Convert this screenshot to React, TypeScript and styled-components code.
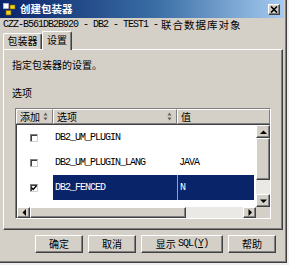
import React from "react";
import styled, { createGlobalStyle } from "styled-components";

const CJK = `"Noto Sans CJK SC", "Liberation Sans", sans-serif`;
const MONO = `"Liberation Mono", "Noto Sans CJK SC", monospace`;

const GlobalStyle = createGlobalStyle`
  html, body { margin: 0; padding: 0; background: #efefef; }
  body { width: 289px; height: 265px; overflow: hidden; font-family: ${CJK}; }
  * { box-sizing: border-box; }
`;

const raised = `
  background: #d4d0c8;
  border: 1px solid;
  border-color: #ffffff #404040 #404040 #ffffff;
  box-shadow: inset -1px -1px 0 #808080;
`;

const Window = styled.div`
  width: 287px;
  height: 263px;
  background: #d4d0c8;
  border-right: 1px solid #404040;
  border-bottom: 1px solid #404040;
  box-shadow: inset -1px -1px 0 #808080;
  display: flex;
  flex-direction: column;
`;

const TitleBar = styled.div`
  height: 18px;
  margin-right: 2px;
  background: linear-gradient(to right, #0a246a 0%, #3a6ea5 55%, #a6caf0 100%);
  display: flex;
  align-items: center;
  padding: 0 3px 0 3px;
  gap: 4px;
`;

const Title = styled.span`
  color: #ffffff;
  font-family: ${CJK};
  font-weight: bold;
  font-size: 10.5px;
  line-height: 18px;
`;

const CloseButton = styled.div`
  ${raised}
  margin-left: auto;
  margin-right: 1px;
  width: 12px;
  height: 11px;
  display: flex;
  align-items: center;
  justify-content: center;
`;

const Subtitle = styled.div`
  height: 13px;
  padding-left: 3px;
  display: flex;
  align-items: center;
  white-space: pre;
  color: #000;
`;

const Mono = styled.span<{ $color?: string }>`
  font-family: ${MONO};
  font-size: 10px;
  letter-spacing: -1px;
  white-space: pre;
  color: ${(p) => p.$color || "#000"};
`;

const SubCJK = styled.span`
  font-family: ${CJK};
  font-size: 10.5px;
  letter-spacing: 1px;
  line-height: 13px;
  margin-left: 3px;
`;

const TabStrip = styled.div`
  height: 18px;
  padding-left: 3px;
  display: flex;
  align-items: flex-end;
`;

const Tab = styled.div<{ $active?: boolean; $w: number }>`
  width: ${(p) => p.$w}px;
  height: ${(p) => (p.$active ? 19 : 16)}px;
  margin-bottom: ${(p) => (p.$active ? -1 : 0)}px;
  position: relative;
  z-index: ${(p) => (p.$active ? 1 : 0)};
  background: #d4d0c8;
  border-top: 1px solid #ffffff;
  border-left: 1px solid #ffffff;
  border-right: 1px solid #404040;
  box-shadow: inset -1px 0 0 #808080;
  border-radius: 2px 2px 0 0;
  font-family: ${CJK};
  font-size: 10px;
  line-height: ${(p) => (p.$active ? 16 : 14)}px;
  text-align: center;
  color: #000;
`;

const Panel = styled.div`
  width: 280px;
  height: 181px;
  margin-left: 3px;
  border: 1px solid;
  border-color: #ffffff #404040 #404040 #ffffff;
  box-shadow: inset -1px -1px 0 #808080;
  display: flex;
  flex-direction: column;
`;

const Text = styled.div<{ $mt: number }>`
  margin: ${(p) => p.$mt}px 0 0 8px;
  font-family: ${CJK};
  font-size: 10px;
  line-height: 12px;
  color: #000;
`;

const TableFrame = styled.div`
  margin: 9px 0 0 11px;
  width: 256px;
  height: 111px;
  border: 1px solid;
  border-color: #808080 #ffffff #ffffff #808080;
  background: #ffffff;
  display: flex;
  flex-direction: column;
`;

const Header = styled.div`
  height: 15px;
  display: flex;
  background: #d4d0c8;
`;

const HeaderCell = styled.div<{ $w?: number }>`
  ${(p) => (p.$w ? `width: ${p.$w}px;` : "flex: 1;")}
  height: 15px;
  border-top: 1px solid #ffffff;
  border-left: 1px solid #ffffff;
  border-right: 1px solid #808080;
  border-bottom: 1px solid #808080;
  display: flex;
  align-items: center;
  padding: 0 4px 0 3px;
  font-family: ${CJK};
  font-size: 10px;
  line-height: 13px;
  color: #000;
`;

const SortIcon = styled.svg`
  margin-left: auto;
`;

const ListArea = styled.div`
  flex: 1;
  border-top: 1px solid #404040;
  border-left: 1px solid #404040;
  display: grid;
  grid-template-columns: 1fr 14px;
  grid-template-rows: 1fr 11px;
`;

const Rows = styled.div`
  background: #ffffff;
  overflow: hidden;
`;

const Row = styled.div`
  height: 25px;
  display: grid;
  grid-template-columns: 36px 124px 1fr;
`;

const Cell = styled.div<{ $sel?: boolean; $divider?: boolean }>`
  display: flex;
  align-items: center;
  padding-left: 2px;
  background: ${(p) => (p.$sel ? "#0a246a" : "transparent")};
  border-left: ${(p) => (p.$divider ? "1px solid #8ea0d0" : "none")};
  margin-right: ${(p) => (p.$divider ? 2 : 0)}px;
`;

const CheckCell = styled.div`
  display: flex;
  align-items: center;
  padding-left: 13px;
`;

const CheckBox = styled.div`
  width: 8px;
  height: 8px;
  background: #ffffff;
  border-top: 1px solid #808080;
  border-left: 1px solid #808080;
  border-right: 1px solid #d4d0c8;
  border-bottom: 1px solid #d4d0c8;
  box-shadow: inset 1px 1px 0 #404040;
  display: flex;
  align-items: center;
  justify-content: center;
`;

const VScroll = styled.div`
  display: flex;
  flex-direction: column;
  background: #ebe9e5;
`;

const HScroll = styled.div`
  display: flex;
  background: #ebe9e5;
`;

const ScrollBtn = styled.div<{ $w: number; $h: number }>`
  ${raised}
  width: ${(p) => p.$w}px;
  height: ${(p) => p.$h}px;
  flex: none;
  display: flex;
  align-items: center;
  justify-content: center;
`;

const Track = styled.div`
  flex: 1;
`;

const Corner = styled.div`
  background: #d4d0c8;
`;

const ButtonRow = styled.div`
  display: flex;
  justify-content: flex-end;
  gap: 5px;
  padding: 5px 10px 0 0;
`;

const Button = styled.div<{ $w: number }>`
  ${raised}
  width: ${(p) => p.$w}px;
  height: 18px;
  display: flex;
  align-items: center;
  justify-content: center;
  font-family: ${CJK};
  font-size: 10px;
  line-height: 14px;
  color: #000;
  white-space: nowrap;
`;

const Underline = styled.span`
  text-decoration: underline;
`;

const Sort = () => (
  <SortIcon width="5" height="9" viewBox="0 0 5 9">
    <path d="M2.5 0.5 L4.5 3.5 L0.5 3.5 Z" fill="#606060" />
    <path d="M0.5 5.5 L4.5 5.5 L2.5 8.5 Z" fill="#606060" />
  </SortIcon>
);

const Arrow = ({ dir }: { dir: "up" | "down" | "left" | "right" }) => {
  const d = {
    up: "M0 4 L3.5 0.5 L7 4 Z",
    down: "M0 0.5 L7 0.5 L3.5 4 Z",
    left: "M4 0 L0.5 3.5 L4 7 Z",
    right: "M0.5 0 L4 3.5 L0.5 7 Z",
  }[dir];
  const vertical = dir === "up" || dir === "down";
  return (
    <svg width={vertical ? 7 : 4} height={vertical ? 4 : 7} viewBox={vertical ? "0 0 7 4" : "0 0 4 7"}>
      <path d={d} fill="#000" />
    </svg>
  );
};

const AppIcon = () => (
  <svg width="13" height="13" viewBox="0 0 13 13">
    <rect x="0.5" y="0.5" width="5" height="5" fill="#ffffff" stroke="#c8c8c8" strokeWidth="0.6" />
    <rect x="7" y="2" width="5" height="4" fill="#f0d020" stroke="#806000" strokeWidth="0.6" />
    <rect x="3" y="7.5" width="5" height="4.5" fill="#f0d020" stroke="#806000" strokeWidth="0.6" />
  </svg>
);

type Item = { name: string; value: string; checked: boolean; selected: boolean };

const items: Item[] = [
  { name: "DB2_UM_PLUGIN", value: "", checked: false, selected: false },
  { name: "DB2_UM_PLUGIN_LANG", value: "JAVA", checked: false, selected: false },
  { name: "DB2_FENCED", value: "N", checked: true, selected: true },
];

export default function App() {
  return (
    <>
      <GlobalStyle />
      <Window>
        <TitleBar>
          <AppIcon />
          <Title>创建包装器</Title>
          <CloseButton>
            <svg width="8" height="7" viewBox="0 0 8 7">
              <path d="M1 0.5 L7 6.5 M7 0.5 L1 6.5" stroke="#000" strokeWidth="1.6" />
            </svg>
          </CloseButton>
        </TitleBar>
        <Subtitle>
          <Mono>{"CZZ-B561DB2B920 - DB2 - TEST1 -"}</Mono>
          <SubCJK>联合数据库对象</SubCJK>
        </Subtitle>
        <TabStrip>
          <Tab $w={39}>包装器</Tab>
          <Tab $w={30} $active>
            设置
          </Tab>
        </TabStrip>
        <Panel>
          <Text $mt={9}>指定包装器的设置。</Text>
          <Text $mt={16}>选项</Text>
          <TableFrame>
            <Header>
              <HeaderCell $w={37}>
                添加
                <Sort />
              </HeaderCell>
              <HeaderCell $w={124}>
                选项
                <Sort />
              </HeaderCell>
              <HeaderCell>值</HeaderCell>
            </Header>
            <ListArea>
              <Rows>
                {items.map((it) => (
                  <Row key={it.name}>
                    <CheckCell>
                      <CheckBox>
                        {it.checked && (
                          <svg width="6" height="6" viewBox="0 0 6 6">
                            <path d="M0.5 2.5 L2.2 4.5 L5.5 0.8" stroke="#000" strokeWidth="1.3" fill="none" />
                          </svg>
                        )}
                      </CheckBox>
                    </CheckCell>
                    <Cell $sel={it.selected}>
                      <Mono $color={it.selected ? "#fff" : "#000"}>{it.name}</Mono>
                    </Cell>
                    <Cell $sel={it.selected} $divider={it.selected}>
                      <Mono $color={it.selected ? "#fff" : "#000"}>{it.value}</Mono>
                    </Cell>
                  </Row>
                ))}
              </Rows>
              <VScroll>
                <ScrollBtn $w={14} $h={13}>
                  <Arrow dir="up" />
                </ScrollBtn>
                <ScrollBtn $w={14} $h={42} />
                <Track />
                <ScrollBtn $w={14} $h={13}>
                  <Arrow dir="down" />
                </ScrollBtn>
              </VScroll>
              <HScroll>
                <ScrollBtn $w={13} $h={11}>
                  <Arrow dir="left" />
                </ScrollBtn>
                <ScrollBtn $w={156} $h={11} />
                <Track />
                <ScrollBtn $w={13} $h={11}>
                  <Arrow dir="right" />
                </ScrollBtn>
              </HScroll>
              <Corner />
            </ListArea>
          </TableFrame>
        </Panel>
        <ButtonRow>
          <Button $w={48}>确定</Button>
          <Button $w={48}>取消</Button>
          <Button $w={82}>
            显示&nbsp;<Mono>SQL(<Underline>Y</Underline>)</Mono>
          </Button>
          <Button $w={48}>帮助</Button>
        </ButtonRow>
      </Window>
    </>
  );
}
